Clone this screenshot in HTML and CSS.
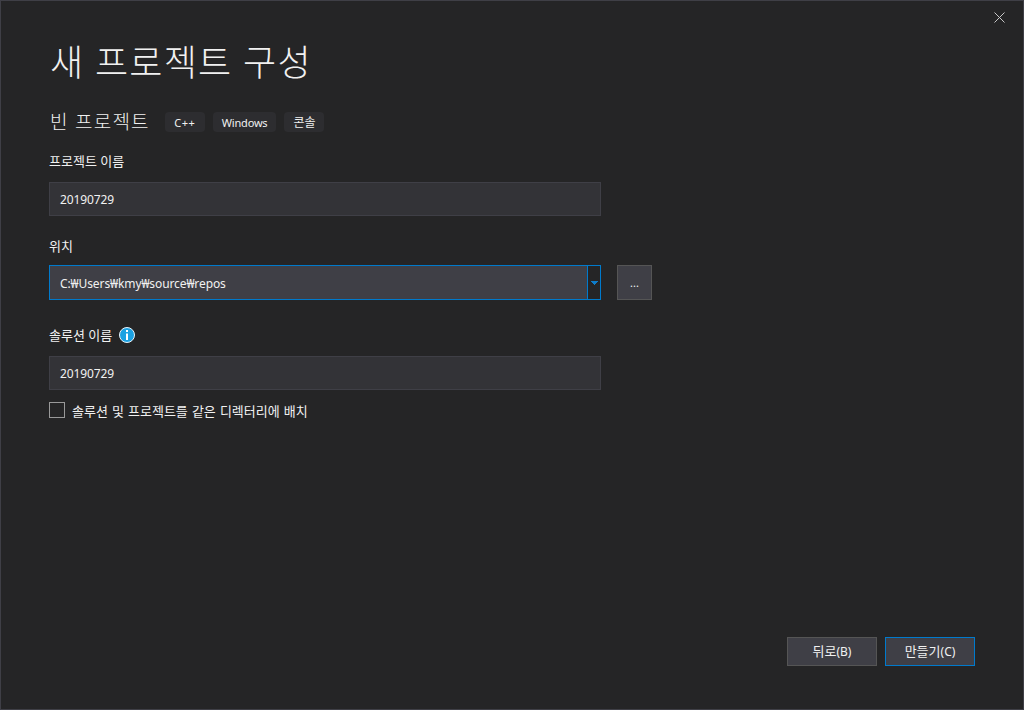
FILE: index.html
```html
<!DOCTYPE html>
<html lang="ko">
<head>
<meta charset="utf-8">
<title>새 프로젝트 구성</title>
<link rel="stylesheet" href="styles.css">
</head>
<body>
<div class="window">
  <button class="close" aria-label="닫기">
    <svg width="11" height="11" viewBox="0 0 11 11"><path d="M0.5 0.5L10.5 10.5M10.5 0.5L0.5 10.5" stroke="#c8c8c8" stroke-width="1" fill="none"/></svg>
  </button>
  <main class="content">
    <h1 class="title">새 프로젝트 구성</h1>
    <div class="subtitle-row">
      <h2 class="subtitle">빈 프로젝트</h2>
      <div class="tags">
        <span class="tag tag-cpp">C++</span>
        <span class="tag">Windows</span>
        <span class="tag tag-cjk">콘솔</span>
      </div>
    </div>
    <label class="label label-name">프로젝트 이름</label>
    <div class="field">20190729</div>
    <label class="label label-loc">위치</label>
    <div class="combo-row">
      <div class="combo">
        <div class="combo-text">C:₩Users₩kmy₩source₩repos</div>
        <div class="combo-btn"><svg width="7" height="4" viewBox="0 0 7 4"><path d="M0 0H7V1H6V2H5V3H4V4H3V3H2V2H1V1H0Z" fill="#0e7cc9"/></svg></div>
      </div>
      <button class="browse">...</button>
    </div>
    <div class="label label-sol">
      <span>솔루션 이름</span>
      <svg class="info" width="16" height="16" viewBox="0 0 16 16"><circle cx="8" cy="8" r="7.5" fill="#1ba1e2" stroke="#e8f4fb" stroke-width="1"/><rect x="7" y="3" width="2" height="2" fill="#fff"/><rect x="7" y="6.5" width="2" height="6.5" fill="#fff"/></svg>
    </div>
    <div class="field">20190729</div>
    <div class="check-row">
      <span class="checkbox"></span>
      <span class="check-text">솔루션 및 프로젝트를 같은 디렉터리에 배치</span>
    </div>
  </main>
  <footer class="footer">
    <button class="btn"><span class="btn-cjk">뒤로</span>(B)</button>
    <button class="btn btn-primary"><span class="btn-cjk">만들기</span>(C)</button>
  </footer>
</div>
</body>
</html>
```
FILE: styles.css
```css
* { box-sizing: border-box; }
html, body { margin: 0; height: 100%; }
body {
  font-family: "Noto Sans", "Noto Sans CJK KR", sans-serif;
  color: #f1f1f1;
  background: #252526;
}
.window {
  position: relative;
  width: 1024px;
  height: 710px;
  border: 1px solid #3f3f46;
  background: #252526;
  display: flex;
  flex-direction: column;
  justify-content: space-between;
}
.close {
  position: absolute;
  top: 11px;
  right: 18px;
  width: 11px;
  height: 11px;
  padding: 0;
  border: 0;
  background: none;
  display: flex;
}
.content { padding: 37px 0 0 48px; }
.title {
  margin: 0 0 0 1px;
  font-size: 36px;
  line-height: 50px;
  font-weight: 300;
  letter-spacing: 1.25px;
  color: #f1f1f1;
}
.subtitle-row {
  display: flex;
  align-items: center;
  margin-top: 20px;
  height: 28px;
}
.subtitle {
  margin: 0 0 0 1px;
  font-size: 19px;
  line-height: 28px;
  font-weight: 300;
  letter-spacing: 1.25px;
}
.tags { display: flex; gap: 8px; margin-left: 15px; }
.tag {
  min-width: 40px;
  height: 20px;
  padding: 1px 9px 0;
  border-radius: 4px;
  background: #2d2d30;
  font-size: 11px;
  line-height: 20px;
  letter-spacing: -0.2px;
  text-align: center;
}
.tag-cpp { letter-spacing: 0.5px; }
.tag-cjk { padding: 1px 8px 0; font-size: 12px; letter-spacing: 0; }
.label {
  display: block;
  font-size: 13px;
  line-height: 18px;
  color: #f1f1f1;
}
.label-name { margin-top: 16px; height: 19px; }
.label-loc { margin-top: 21px; height: 18px; }
.label-sol {
  margin-top: 24px;
  height: 21px;
  display: flex;
  align-items: center;
  gap: 7px;
}
.info { display: block; }
.field {
  margin-top: 11px;
  width: 552px;
  height: 34px;
  padding: 0 10px;
  border: 1px solid #3f3f46;
  background: #333337;
  font-size: 12px;
  line-height: 34px;
  letter-spacing: -0.1px;
}
.combo-row {
  display: flex;
  gap: 16px;
  margin-top: 10px;
}
.combo {
  display: flex;
  width: 552px;
  height: 35px;
  border: 1px solid #007acc;
}
.combo-text {
  flex: 1;
  padding: 0 10px;
  background: #3f3f46;
  font-size: 12px;
  line-height: 35px;
  letter-spacing: -0.1px;
}
.combo-btn {
  width: 13px;
  border-left: 1px solid #007acc;
  background: #252526;
  display: flex;
  align-items: center;
  justify-content: center;
}
.browse {
  width: 35px;
  height: 35px;
  padding: 0;
  border: 1px solid #555555;
  background: #3f3f46;
  color: #f1f1f1;
  font: inherit;
  font-size: 11px;
}
.check-row {
  display: flex;
  align-items: center;
  gap: 7px;
  margin-top: 12px;
  height: 16px;
}
.checkbox {
  width: 16px;
  height: 16px;
  border: 1px solid #999999;
  background: transparent;
}
.check-text {
  padding-top: 1px;
  font-size: 13px;
  line-height: 18px;
  word-spacing: 0.7px;
}
.footer {
  display: flex;
  justify-content: flex-end;
  gap: 8px;
  padding: 0 48px 43px 0;
}
.btn {
  width: 90px;
  height: 29px;
  padding: 0 0 2px;
  border: 1px solid #555555;
  background: #3f3f46;
  color: #f1f1f1;
  font: inherit;
  font-size: 12px;
}
.btn-cjk { font-size: 13px; }
.btn-primary { border-color: #007acc; }
```
